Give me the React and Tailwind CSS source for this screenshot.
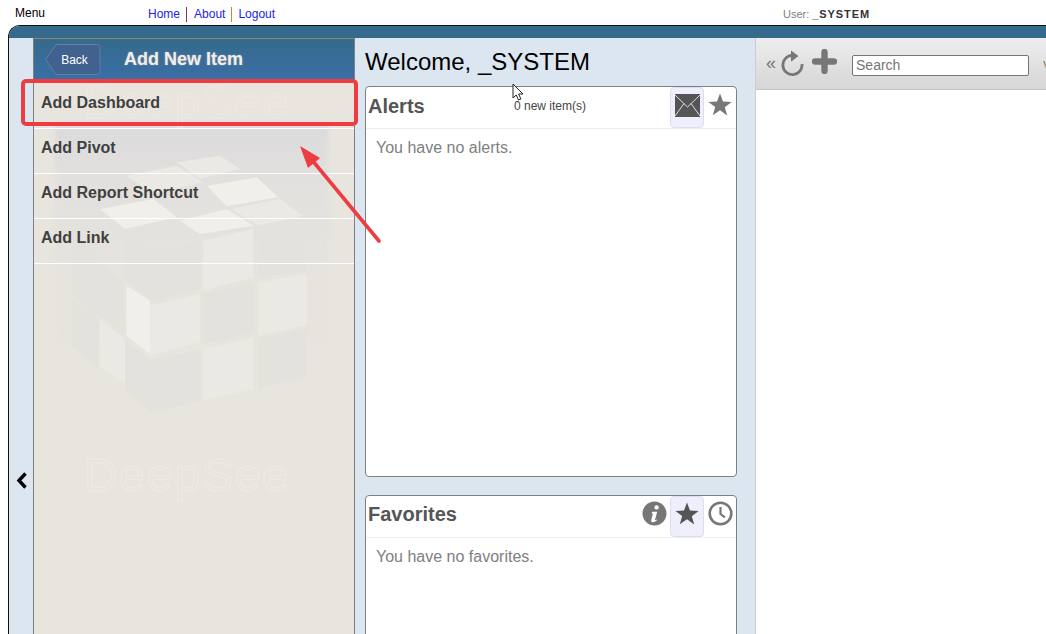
import React from "react";

const Star = ({ size = 24, color = "#777" }) => (
  <svg width={size} height={size} viewBox="0 0 24 24"><path fill={color} d="M12 0.5l3 8.1 8.6.3-6.8 5.3 2.4 8.3L12 17.3l-7.2 4.9 2.4-8.3L.4 8.9 9 8.6z" /></svg>
);

const Envelope = () => (
  <svg width="25" height="23" viewBox="0 0 25 23">
    <rect width="25" height="23" fill="#555" />
    <path d="M0 1l12.5 12L25 1M0 22l9-12.5M25 22L16 9.5" fill="none" stroke="#ddd" strokeWidth="1" />
  </svg>
);

const Info = () => (
  <svg width="25" height="25" viewBox="0 0 25 25">
    <circle cx="12.5" cy="12.5" r="12" fill="#777" />
    <circle cx="14.6" cy="6.4" r="2.2" fill="#fff" />
    <path d="M10 10.8h5.2l-2.2 8.2q0 .8 1.8-.5l.4.6q-2.6 2.6-5 2.2-1.5-.5-1-2.2l1.7-6.4-1.2-.3z" fill="#fff" />
  </svg>
);

const Clock = () => (
  <svg width="25" height="25" viewBox="0 0 25 25">
    <circle cx="12.5" cy="12.5" r="10.8" fill="none" stroke="#777" strokeWidth="2.6" />
    <path d="M12.5 6v7l4.4 3.4" fill="none" stroke="#777" strokeWidth="2.2" />
  </svg>
);

const Reload = () => (
  <svg width="24" height="26" viewBox="0 0 24 26">
    <path d="M11 5.4A9.6 9.6 0 1 0 21 14" fill="none" stroke="#777" strokeWidth="2.8" />
    <path d="M10 0.5l7.5 5.5-7.5 5.8z" fill="#777" />
  </svg>
);

const Plus = () => (
  <svg width="25" height="25" viewBox="0 0 25 25">
    <path d="M12.5 3v19M3 12.5h19" stroke="#777" strokeWidth="6.4" strokeLinecap="round" />
  </svg>
);

const dark = [
  "215,290 295,345 295,590 215,530",
  "295,430 370,490 375,640 295,590",
  "370,330 450,400 450,540 375,480",
  "215,540 295,600 295,745 215,685",
  "375,665 450,720 450,875 375,815",
  "450,400 600,365 600,510 450,545",
  "775,320 920,295 920,455 775,475",
  "610,525 760,490 760,640 610,675",
  "450,725 600,690 600,845 450,880",
  "775,660 920,630 920,775 775,810",
];
const light = [
  "610,365 760,330 760,475 610,515",
  "775,490 920,465 920,620 775,650",
  "450,560 600,525 600,670 450,710",
  "610,690 760,655 760,810 610,845",
  "300,600 375,660 375,795 300,745",
];
const bright = [
  "300,270 460,240 530,295 375,330",
  "540,305 680,270 760,320 600,345",
  "620,200 770,175 835,235 680,262",
  "380,500 450,545 450,705 380,650",
];
const faint = [
  "380,170 530,140 610,190 460,225",
  "695,270 840,240 910,290 775,320",
  "530,130 660,110 720,150 600,180",
];

const Cube = () => (
  <svg className="absolute left-0 top-0" width="320" height="595" viewBox="0 0 320 595">
    <defs>
      <linearGradient id="haze" x1="0" y1="0" x2="0" y2="1">
        <stop offset="0" stopColor="#dcdbdc" />
        <stop offset="0.18" stopColor="#e2e0de" />
        <stop offset="0.5" stopColor="#e7e4de" />
        <stop offset="1" stopColor="#e8e5de" />
      </linearGradient>
      <filter id="soft" x="-10%" y="-10%" width="120%" height="120%">
        <feGaussianBlur stdDeviation="6" />
      </filter>
    </defs>
    <g transform="translate(-34,-39) translate(0,120) scale(0.3333)">
      <rect x="165" y="10" width="820" height="950" fill="url(#haze)" filter="url(#soft)" />
      {dark.map((p) => <polygon key={p} points={p} fill="#e4e2dd" />)}
      {light.map((p) => <polygon key={p} points={p} fill="#ebe9e4" />)}
      {bright.map((p) => <polygon key={p} points={p} fill="#f0efea" />)}
      {faint.map((p) => <polygon key={p} points={p} fill="#ebe9e4" />)}
    </g>
  </svg>
);

const Card = ({ title, titleClass, className, note, icons, body }) => (
  <div className={`bg-white border border-[#808080] rounded-[4px] flex flex-col overflow-hidden ${className}`}>
    <div className="h-[42px] shrink-0 border-b border-[#eee] flex items-center relative">
      <span className={`ml-[2px] text-[20px] font-bold text-[#555] leading-none ${titleClass}`}>{title}</span>
      {note && <span className="absolute left-[148px] top-[12px] text-[12px] text-[#444] leading-[14px]">{note}</span>}
      <div className="ml-auto flex items-center">{icons}</div>
    </div>
    <div className="pl-[10px] pt-[10px] text-[16px] leading-[18px] text-[#808080]">{body}</div>
  </div>
);

const Active = ({ children }) => (
  <div className="w-[34px] h-[41px] pb-[5px] bg-[#eeeefc] border border-[#ddddf0] rounded-[4px] flex items-center justify-center">{children}</div>
);

const Plain = ({ children }) => <div className="w-[32px] h-[41px] pb-[6px] flex items-center justify-center">{children}</div>;

const items = ["Add Dashboard", "Add Pivot", "Add Report Shortcut", "Add Link"];

export default function App() {
  return (
    <div className="relative w-[1046px] h-[634px] overflow-hidden bg-white font-['Liberation_Sans',Arial,sans-serif]">
      <div className="h-[25px] flex relative">
        <span className="ml-[15px] mt-[6px] text-[12px] leading-[14px] text-black">Menu</span>
        <div className="ml-[103px] mt-[7px] h-[15px] flex items-center text-[12px] leading-[15px] text-[#2222ee]">
          <span className="pr-[6px]">Home</span>
          <span className="pl-[7px] pr-[6px] border-l border-[#883355]">About</span>
          <span className="pl-[6px] border-l border-[#cc8833]">Logout</span>
        </div>
        <div className="absolute left-[783px] top-[7px] text-[11px] leading-[14px] text-[#808080]">
          User: <b className="text-[#333] tracking-[0.9px]">_SYSTEM</b>
        </div>
      </div>

      <div className="h-[609px] ml-[8px] border-l border-t border-[#111] rounded-tl-[12px] overflow-hidden flex flex-col">
        <div className="h-[12px] shrink-0 bg-[#356a8c]" />
        <div className="flex flex-1 min-h-0">
          <div className="w-[24px] shrink-0 bg-[#dce6f1] flex flex-col items-center">
            <svg className="mt-[434px] ml-[1px]" width="12" height="17" viewBox="0 0 12 17">
              <path d="M9.5 1.5L3 8.5l6.5 7" fill="none" stroke="#000" strokeWidth="3.4" />
            </svg>
          </div>

          <div className="relative w-[322px] shrink-0 bg-[#e8e5de] border-l border-r border-[#808080] flex flex-col">
            <Cube />
            <div className="absolute left-[50px] top-[41px] text-[46px] leading-[46px] tracking-[2px] text-transparent [-webkit-text-stroke:1px_#ece9e3]">DeepSee</div>
            <div className="absolute left-[50px] top-[414px] text-[46px] leading-[46px] tracking-[2px] text-transparent [-webkit-text-stroke:1px_#eeebe5]">DeepSee</div>
            <div className="relative h-[41px] shrink-0 border-t border-[#8a8a70] bg-gradient-to-b from-[#356a8c] to-[#3a6ea5] flex items-center">
              <div className="relative ml-[11px] w-[56px] h-[31px] flex items-center justify-center">
                <svg className="absolute inset-0" width="56" height="31" viewBox="0 0 56 31">
                  <path d="M11 .5h41q3 0 3 3v24q0 3-3 3H11L.7 15.5z" fill="#41628f" stroke="#5f7ea8" />
                </svg>
                <span className="relative ml-[3px] mt-[2px] text-[12px] text-white">Back</span>
              </div>
              <span className="ml-[23px] text-[18px] font-bold text-[#eeeeee] [text-shadow:0_0_2px_#999]">Add New Item</span>
            </div>
            <div className="relative h-[5px] shrink-0" />
            {items.map((t) => (
              <div key={t} className="relative h-[45px] shrink-0 border-b border-white pl-[7px] pt-[10px] text-[16px] leading-[18px] font-bold text-[#404040]">
                {t}
              </div>
            ))}
          </div>

          <div className="w-[400px] shrink-0 bg-[#dce6f1] pl-[10px] pr-[18px] pt-[10px] flex flex-col">
            <div className="h-[28px] text-[24px] leading-[28px] text-black">Welcome, _SYSTEM</div>
            <Card
              className="mt-[10px] h-[391px] shrink-0"
              titleClass="mb-[4px]"
              title="Alerts"
              note="0 new item(s)"
              body="You have no alerts."
              icons={<><Active><Envelope /></Active><Plain><Star /></Plain></>}
            />
            <Card
              className="mt-[18px] h-[200px] shrink-0"
              titleClass="mb-[6px]"
              title="Favorites"
              body="You have no favorites."
              icons={<><Plain><Info /></Plain><Active><Star color="#555" /></Active><Plain><Clock /></Plain></>}
            />
          </div>

          <div className="flex-1 min-w-0 flex flex-col border-l border-[#ccc] bg-white">
            <div className="h-[52px] shrink-0 border-b border-[#c4c4c4] bg-gradient-to-b from-[#eeeeee] to-[#d6d6d6] flex items-center relative">
              <span className="ml-[10px] mb-[2px] text-[18px] leading-[20px] text-[#777]">«</span>
              <div className="ml-[5px] mb-[2px]"><Reload /></div>
              <div className="ml-[7px] mb-[4px]"><Plus /></div>
              <input
                readOnly
                placeholder="Search"
                className="ml-[15px] mt-[4px] w-[177px] h-[21px] bg-white border border-[#767676] rounded-[2px] px-[3px] text-[14px] text-[#666] placeholder:text-[#757575] outline-none"
              />
              <span className="absolute left-[287px] top-[20px] text-[13px] leading-[15px] text-[#8a7a60]">V</span>
            </div>
          </div>
        </div>
      </div>

      <div className="absolute left-[21px] top-[79px] w-[337px] h-[47px] border-[4px] border-[#ee3d42] rounded-[5px]" />
      <svg className="absolute left-[290px] top-[140px]" width="100" height="110" viewBox="0 0 100 110">
        <path d="M89 101L22 20" stroke="#ee3d42" strokeWidth="3.6" strokeLinecap="round" />
        <path d="M10 6l20 12-12 10z" fill="#ee3d42" />
      </svg>
      <svg className="absolute left-[512px] top-[83px]" width="13" height="19" viewBox="0 0 13 19">
        <path d="M1 1v14l3.2-3 2.3 5 2.4-1-2.3-5h4.4z" fill="#fff" stroke="#222" strokeWidth="1" />
      </svg>
    </div>
  );
}
